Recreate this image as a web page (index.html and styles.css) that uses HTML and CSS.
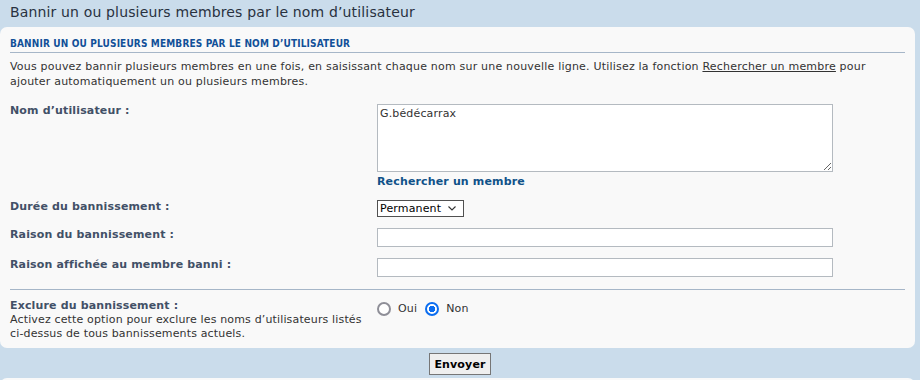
FILE: index.html
```html
<!DOCTYPE html>
<html lang="fr">
<head>
    <meta charset="UTF-8">
    <title>Bannir un ou plusieurs membres</title>
    <link rel="stylesheet" href="styles.css">
</head>
<body>
    <h1 class="page-title">Bannir un ou plusieurs membres par le nom d’utilisateur</h1>
    <form class="panel">
        <h3 class="legend">Bannir un ou plusieurs membres par le nom d’utilisateur</h3>
        <p class="intro">Vous pouvez bannir plusieurs membres en une fois, en saisissant chaque nom sur une nouvelle ligne. Utilisez la fonction <a href="#">Rechercher un membre</a> pour ajouter automatiquement un ou plusieurs membres.</p>

        <dl class="row">
            <dt><label for="ban">Nom d’utilisateur :</label></dt>
            <dd>
                <textarea id="ban" class="names">G.bédécarrax</textarea>
                <a class="find" href="#">Rechercher un membre</a>
            </dd>
        </dl>
        <dl class="row">
            <dt><label for="len">Durée du bannissement :</label></dt>
            <dd>
                <select id="len" class="duration">
                    <option>Permanent</option>
                </select>
            </dd>
        </dl>
        <dl class="row">
            <dt><label for="reason">Raison du bannissement :</label></dt>
            <dd><input id="reason" class="text" type="text"></dd>
        </dl>
        <dl class="row">
            <dt><label for="give">Raison affichée au membre banni :</label></dt>
            <dd><input id="give" class="text" type="text"></dd>
        </dl>

        <hr class="sep">

        <dl class="row excl">
            <dt>
                <label>Exclure du bannissement :</label>
                <span class="explain">Activez cette option pour exclure les noms d’utilisateurs listés ci-dessus de tous bannissements actuels.</span>
            </dt>
            <dd class="radios">
                <label><input type="radio" name="exclude"> Oui</label>
                <label><input type="radio" name="exclude" checked> Non</label>
            </dd>
        </dl>
    </form>
    <div class="submit">
        <button class="button1" type="button">Envoyer</button>
    </div>
    <div class="panel next"></div>
</body>
</html>
```

FILE: styles.css
```css
body {
    margin: 0;
    background-color: #cadceb;
    color: #333333;
    font-family: "DejaVu Sans", Verdana, sans-serif;
    font-size: 11px;
    letter-spacing: 0.15px;
    overflow: hidden;
}
.page-title {
    margin: 0;
    height: 27px;
    padding: 1px 10px 0;
    box-sizing: border-box;
    font-size: 14px;
    font-weight: normal;
    line-height: 22px;
    color: #28313f;
}
.panel {
    background-color: #f9f9f9;
    border-radius: 7px;
    margin-right: 5px;
    padding: 10px 10px 7px;
}
.legend {
    margin: 0;
    padding-bottom: 2px;
    border-bottom: 1px solid #a6b6c8;
    font-family: "DejaVu Sans Condensed", sans-serif;
    font-size: 10px;
    font-weight: bold;
    text-transform: uppercase;
    color: #115098;
    line-height: 13px;
}
.intro {
    margin: 6px 0 15px;
    line-height: 15px;
    letter-spacing: 0.2px;
}
.intro a {
    color: #333333;
}
.row {
    display: grid;
    grid-template-columns: 367px 1fr;
    margin: 0 0 11px;
    line-height: 14px;
}
.row dt, .row dd {
    margin: 0;
}
.row dt label {
    font-weight: bold;
    color: #425067;
}
.names {
    display: block;
    width: 456px;
    height: 68px;
    box-sizing: border-box;
    border: 1px solid #b4bac0;
    margin: 0;
    padding: 2px;
    font-family: "DejaVu Sans", sans-serif;
    font-size: 11px;
    letter-spacing: 0.15px;
    color: #333333;
}
.find {
    display: block;
    margin-top: 3px;
    font-weight: bold;
    color: #105289;
    text-decoration: none;
}
.duration {
    display: block;
    appearance: none;
    width: 87px;
    height: 17px;
    margin: 0;
    padding: 0 0 0 2px;
    border: 1px solid #505050;
    border-radius: 0;
    background: #ffffff url("data:image/svg+xml,%3Csvg xmlns='http://www.w3.org/2000/svg' width='8' height='5'%3E%3Cpath d='M0.5 0.5 L4 4 L7.5 0.5' fill='none' stroke='%23333' stroke-width='1.1'/%3E%3C/svg%3E") no-repeat right 7px center;
    font-family: "DejaVu Sans", sans-serif;
    font-size: 11px;
    letter-spacing: 0.15px;
    color: #000000;
}
.text {
    display: block;
    width: 456px;
    height: 19px;
    box-sizing: border-box;
    border: 1px solid #b4bac0;
    margin: 0;
    background: #ffffff;
}
.sep {
    border: 0;
    border-top: 1px solid #a6b6c8;
    margin: 12px 0 9px;
}
.excl {
    margin-bottom: 0;
}
.explain {
    display: block;
    padding-right: 4px;
}
.radios {
    display: flex;
    gap: 8px;
    align-items: center;
    align-self: start;
    padding-top: 3px;
}
.radios label {
    display: flex;
    align-items: center;
}
.radios input {
    appearance: none;
    width: 14px;
    height: 14px;
    margin: 0 7px 0 0;
    border: 2px solid #8f8f98;
    border-radius: 50%;
    background: #ffffff;
    box-sizing: border-box;
}
.radios input:checked {
    border-color: #0b6df0;
    background: radial-gradient(circle, #0b6df0 0 3px, #ffffff 3.5px);
}
.submit {
    text-align: center;
    padding: 5px 0 3px;
}
.button1 {
    font-family: "DejaVu Sans", sans-serif;
    font-size: 11px;
    font-weight: bold;
    letter-spacing: 0.15px;
    color: #000000;
    background: #efefef;
    border: 1px solid #767676;
    padding: 2px 4px;
    height: 22px;
}
.next {
    height: 20px;
    padding: 0;
    border-radius: 7px 7px 0 0;
}
```
